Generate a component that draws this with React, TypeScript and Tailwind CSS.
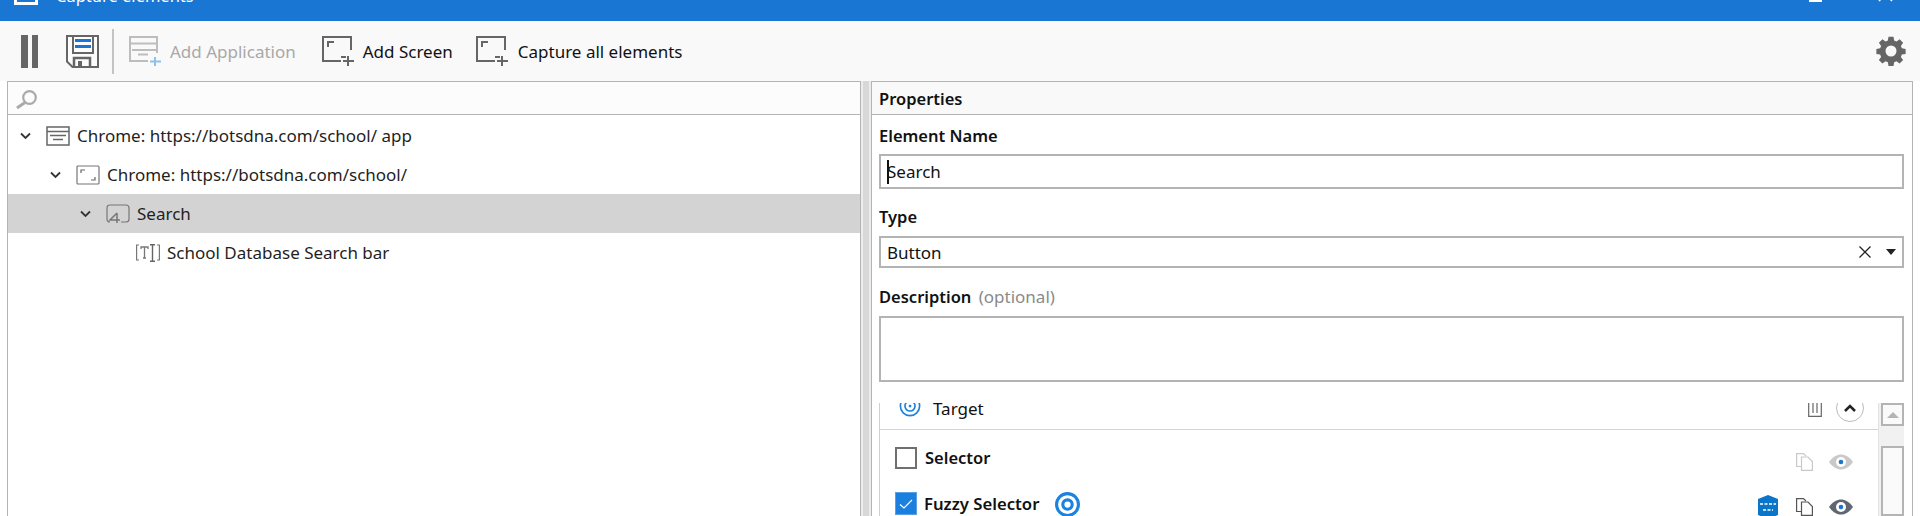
import React from "react";

const Pause = () => (
  <svg width="17" height="33" viewBox="0 0 17 33"><rect x="0" y="0" width="7" height="33" fill="#666" /><rect x="11" y="0" width="6" height="33" fill="#666" /></svg>
);
const Save = () => (
  <svg width="33" height="33" viewBox="0 0 33 33" fill="none">
    <path d="M1 1H32V32H6.500L1 26.500Z" fill="#fcfcfc" stroke="#666" strokeWidth="2" />
    <path d="M7 1V18H27V1" stroke="#666" strokeWidth="2" />
    <rect x="9" y="4" width="16" height="3" fill="#1976d2" />
    <rect x="9" y="10" width="16" height="3" fill="#1976d2" />
    <path d="M8 32V23H24V32" stroke="#666" strokeWidth="2.500" />
    <rect x="12" y="26" width="4" height="6" fill="#666" />
  </svg>
);
const AddApp = () => (
  <svg width="32" height="30" viewBox="0 0 32 30" fill="none">
    <path d="M19 25H1V1H28V17" stroke="#bdbdbd" strokeWidth="2" />
    <path d="M1 7.500H28" stroke="#bdbdbd" strokeWidth="2" />
    <path d="M3 14H27M9 18.500H19" stroke="#bdbdbd" strokeWidth="2" />
    <path d="M26 21V30M21 25.500H32" stroke="#90c0ec" strokeWidth="2" />
  </svg>
);
const AddScreen = () => (
  <svg width="32" height="30" viewBox="0 0 32 30" fill="none">
    <path d="M19 25H1V1H29V14" stroke="#666" strokeWidth="2" />
    <path d="M6 11V6H12" stroke="#666" strokeWidth="2" />
    <path d="M19 21H24" stroke="#666" strokeWidth="2" />
    <path d="M26 20V30M21 25H32" stroke="#666" strokeWidth="2" />
  </svg>
);
const Gear = () => (
  <svg width="30" height="30" viewBox="0 0 24 24"><path fillRule="evenodd" fill="#666" d="M10 0.6h4l.5 3 1.900 .8 2.500-1.800 2.800 2.800-1.800 2.500 .8 1.900 3 .5v4l-3 .5-.8 1.900 1.800 2.500-2.800 2.800-2.500-1.800-1.900 .8-.5 3h-4l-.5-3-1.900-.8-2.500 1.800-2.800-2.800 1.800-2.500-.8-1.900-3-.5v-4l3-.5 .8-1.900-1.800-2.500 2.800-2.800 2.500 1.800 1.900-.8zM12 7.600a4.400 4.400 0 1 0 0 8.800a4.400 4.400 0 0 0 0-8.800z" /></svg>
);
const Chevron = () => (
  <svg width="11" height="8" viewBox="0 0 11 8" fill="none"><path d="M1 1.500L5.500 6L10 1.500" stroke="#333" strokeWidth="1.800" /></svg>
);
const AppIcon = () => (
  <svg width="24" height="20" viewBox="0 0 24 20" fill="none">
    <rect x="1" y="1" width="22" height="18" stroke="#666" strokeWidth="1.500" />
    <path d="M1 5.500H23M4 9.500H20M7 13.500H17" stroke="#666" strokeWidth="1.500" />
  </svg>
);
const ScreenIcon = () => (
  <svg width="24" height="20" viewBox="0 0 24 20" fill="none">
    <rect x="1" y="1" width="22" height="18" rx="1" stroke="#777" strokeWidth="1.200" />
    <path d="M5 8V5H9M19 12V15H15" stroke="#666" strokeWidth="1.200" />
  </svg>
);
const ElemIcon = () => (
  <svg width="24" height="20" viewBox="0 0 24 20" fill="none">
    <path d="M4 18C2 18 1 17 1 15V4C1 2 2 1 4 1H20C22 1 23 2 23 4V15C23 17 22 18 20 18H15" stroke="#777" strokeWidth="1.200" />
    <path d="M11 9V19M11 9L4 16H14" stroke="#777" strokeWidth="1.500" />
  </svg>
);
const TextIcon = () => (
  <svg width="24" height="18" viewBox="0 0 24 18" fill="none">
    <path d="M3 1H0.600V16H3M21 1H23.400V16H21" stroke="#777" strokeWidth="1.200" />
    <path d="M5 5V3H12V5M8.500 3V14M7 14H10" stroke="#777" strokeWidth="1.300" />
    <path d="M14 0.700H19M14 17.300H19M16.500 0.700V17.300" stroke="#666" strokeWidth="1.400" />
  </svg>
);
const Target = ({ size, stroke, dot = false }: { size: number; stroke: number; dot?: boolean }) => (
  <svg width={size} height={size} viewBox="0 0 24 24" fill="none">
    <circle cx="12" cy="12" r="10.500" stroke="#1b82e0" strokeWidth={stroke} />
    <circle cx="12" cy="12" r={dot ? 5.5 : 4.5} stroke="#1b82e0" strokeWidth={stroke} />
    {dot && <circle cx="12" cy="12" r="1.500" fill="#1b82e0" />}
  </svg>
);
const Copy = ({ c }: { c: string }) => (
  <svg width="17" height="18" viewBox="0 0 17 18" fill="none">
    <path d="M5.500 13.500H0.600V0.600H7.500L10 3" stroke={c} strokeWidth="1.200" />
    <path d="M5.500 4H12L16.400 8.500V17.400H5.500Z" fill="#fff" stroke={c} strokeWidth="1.200" />
  </svg>
);
const Eye = ({ c }: { c: string }) => (
  <svg width="24" height="16" viewBox="0 0 24 16">
    <path d="M0 8C4 2.500 8 0.500 12 0.500S20 2.500 24 8C20 13.500 16 15.500 12 15.500S4 13.500 0 8Z" fill={c} />
    <circle cx="12" cy="8" r="5" fill="#fff" />
    <circle cx="12" cy="8" r="2.300" fill="#1976d2" />
  </svg>
);
const Hex = () => (
  <svg width="22" height="24" viewBox="0 0 22 24">
    <path d="M11 0L21 4V20L11 24L1 20V4Z" fill="#0b76c9" />
    <path d="M3 9H19M6 15H16" stroke="#fff" strokeWidth="1.500" strokeDasharray="3 1.500" />
  </svg>
);
const Trash = () => (
  <svg width="14" height="14" viewBox="0 0 14 14" fill="none"><path d="M0.700 0V13.300H13.300V0M5 0V10M9 0V10" stroke="#666" strokeWidth="1.200" /></svg>
);
const TreeRow = ({ indent, icon, label, chevron = true, selected = false }: { indent: string; icon: React.ReactNode; label: string; chevron?: boolean; selected?: boolean }) => (
  <div className={`flex h-[39px] items-center ${indent} ${selected ? "bg-[#d3d3d3]" : ""}`}>
    <span className="flex w-[26px] justify-start">{chevron && <Chevron />}</span>
    {icon}
    <span className="ml-[7px] text-[#1f1f1f]">{label}</span>
  </div>
);

export default function App() {
  return (
    <div className="flex h-[516px] w-[1920px] flex-col overflow-hidden bg-white text-[17px] leading-[23px] text-[#111] font-['Noto_Sans','Open_Sans',sans-serif]">
      <header className="flex h-[21px] items-end justify-between overflow-hidden bg-[#1976d2] pb-[16px] pl-[14px] pr-[27px] text-white">
        <div className="flex items-end gap-[18px]">
          <div className="h-[24px] w-[24px] shrink-0 border-[3px] border-white" />
          <span className="-mb-[2px] text-[16.500px]">Capture elements</span>
        </div>
        <div className="mb-[3px] flex items-end gap-[56px]">
          <div className="h-[2px] w-[13px] bg-white" />
          <svg width="15" height="15" viewBox="0 0 15 15" fill="none"><path d="M1 1L14 14M14 1L1 14" stroke="#fff" strokeWidth="1.500" /></svg>
        </div>
      </header>

      <div className="flex h-[60px] shrink-0 items-center bg-[#f9f9f9] pl-[21px] pr-[14px]">
        <Pause />
        <span className="ml-[28px] flex"><Save /></span>
        <div className="ml-[13px] h-[45px] w-[2px] bg-[#c4c4c4]" />
        <span className="ml-[15px] flex"><AddApp /></span>
        <span className="ml-[9px] text-[#a8a8a8]">Add Application</span>
        <span className="ml-[26px] flex"><AddScreen /></span>
        <span className="ml-[9px]">Add Screen</span>
        <span className="ml-[23px] flex"><AddScreen /></span>
        <span className="ml-[10px]">Capture all elements</span>
        <span className="ml-auto flex"><Gear /></span>
      </div>

      <main className="flex min-h-0 flex-1 pl-[7px] pr-[7px]">
        <section className="flex w-[854px] shrink-0 flex-col border-x border-[#b4b4b4]">
          <div className="flex h-[34px] shrink-0 items-center border-y border-[#b4b4b4] bg-[#fcfcfc] pl-[7px]">
            <svg width="22" height="22" viewBox="0 0 22 22" fill="none">
              <circle cx="14.500" cy="10.500" r="6.300" stroke="#aaa" strokeWidth="2.200" />
              <path d="M10 15.500L2 21" stroke="#aaa" strokeWidth="3" />
            </svg>
          </div>
          <div className="pt-[1px]">
            <TreeRow indent="pl-[12px]" icon={<AppIcon />} label="Chrome: https://botsdna.com/school/ app" />
            <TreeRow indent="pl-[42px]" icon={<ScreenIcon />} label="Chrome: https://botsdna.com/school/" />
            <TreeRow indent="pl-[72px]" icon={<ElemIcon />} label="Search" selected />
            <TreeRow indent="pl-[102px]" icon={<TextIcon />} label="School Database Search bar" chevron={false} />
          </div>
        </section>

        <div className="w-[10px] shrink-0 bg-[#ececec] px-[2px]"><div className="h-full bg-[#d8d8d8]" /></div>

        <section className="flex min-w-0 flex-1 flex-col border-x border-[#b4b4b4]">
          <div className="flex h-[34px] shrink-0 items-center border-y border-[#b4b4b4] bg-[#f9f9f9] pl-[7px] text-[16.500px] font-semibold">Properties</div>
          <div className="flex min-h-0 flex-1 flex-col pl-[7px] pr-[8px]">
            <label className="mt-[8px] h-[26px] text-[16.500px] leading-[26px] font-semibold">Element Name</label>
            <div className="mt-[5px] flex h-[35px] shrink-0 items-center border-2 border-[#b4b4b4] pl-[6px]">
              <span className="relative">Search<span className="absolute left-0 top-0 h-[24px] w-[2px] bg-[#111]" /></span>
            </div>
            <label className="mt-[15px] h-[26px] text-[16.500px] leading-[26px] font-semibold">Type</label>
            <div className="mt-[6px] flex h-[32px] shrink-0 items-center border-2 border-[#b4b4b4] pl-[6px] pr-[6px]">
              <span>Button</span>
              <svg className="ml-auto" width="12" height="12" viewBox="0 0 12 12" fill="none"><path d="M0.500 0.500L11.500 11.500M11.500 0.500L0.500 11.500" stroke="#222" strokeWidth="1.300" /></svg>
              <span className="ml-[15px] h-0 w-0 border-x-[5px] border-t-[6px] border-x-transparent border-t-[#222]" />
            </div>
            <label className="mt-[16px] h-[26px] text-[16.500px] leading-[26px] font-semibold">Description <span className="ml-[3px] text-[17px] font-normal text-[#8a8a8a]">(optional)</span></label>
            <div className="mt-[6px] h-[66px] shrink-0 border-2 border-[#b4b4b4]" />
            <div className="mt-[21px] flex min-h-0 flex-1 overflow-hidden">
              <div className="min-w-0 flex-1 border-l border-[#d0d0d0]">
                <div className="flex h-[27px] items-start justify-between overflow-hidden border-b border-[#d4d4d4] pl-[19px] pr-[14px]">
                  <div className="flex items-start gap-[12px]">
                    <span className="-mt-[8px] flex"><Target size={22} stroke={1.800} dot /></span>
                    <span className="-mt-[6px]">Target</span>
                  </div>
                  <div className="flex items-start gap-[14px]">
                    <Trash />
                    <div className="-mt-[9px] flex h-[28px] w-[28px] items-center justify-center rounded-full border border-[#bbb]">
                      <svg width="14" height="9" viewBox="0 0 14 9" fill="none"><path d="M2 7L7 2L12 7" stroke="#222" strokeWidth="2.500" /></svg>
                    </div>
                  </div>
                </div>
                <div className="flex h-[52px] items-start pl-[15px] pr-[25px] pt-[17px]">
                  <span className="h-[22px] w-[22px] border-2 border-[#707070] bg-white" />
                  <span className="ml-[8px] text-[16.500px] leading-[22px] font-semibold">Selector</span>
                  <span className="ml-auto flex items-center gap-[16px] pt-[6px]"><Copy c="#c9c9c9" /><Eye c="#c9c9c9" /></span>
                </div>
                <div className="flex h-[34px] items-start pl-[15px] pr-[25px] pt-[10px]">
                  <span className="flex h-[23px] w-[22px] shrink-0 items-center justify-center border border-[#5aa0e6] bg-[#1b7fdf]">
                    <svg width="14" height="12" viewBox="0 0 14 12" fill="none"><path d="M1 6.500L5 10L13 2" stroke="#fff" strokeWidth="1.200" /></svg>
                  </span>
                  <span className="ml-[7px] text-[16.700px] leading-[23px] font-semibold">Fuzzy Selector</span>
                  <span className="ml-[16px] flex"><Target size={25} stroke={3} /></span>
                  <span className="ml-auto flex items-start gap-[17px] pt-[3px]">
                    <Hex />
                    <span className="flex items-center gap-[16px] pt-[3px]"><Copy c="#555" /><Eye c="#5f6770" /></span>
                  </span>
                </div>
              </div>
              <div className="flex w-[26px] shrink-0 flex-col border-l border-[#e2e2e2] bg-[#f1f1f1] pl-[2px]">
                <div className="flex h-[23px] w-[23px] shrink-0 items-center justify-center border-2 border-[#b4b4b4] bg-[#fafafa]">
                  <span className="h-0 w-0 border-x-[6px] border-b-[6px] border-x-transparent border-b-[#b4b4b4]" />
                </div>
                <div className="mt-[20px] w-[23px] flex-1 border-2 border-[#b4b4b4] bg-[#fafafa]" />
              </div>
            </div>
          </div>
        </section>
      </main>
    </div>
  );
}
